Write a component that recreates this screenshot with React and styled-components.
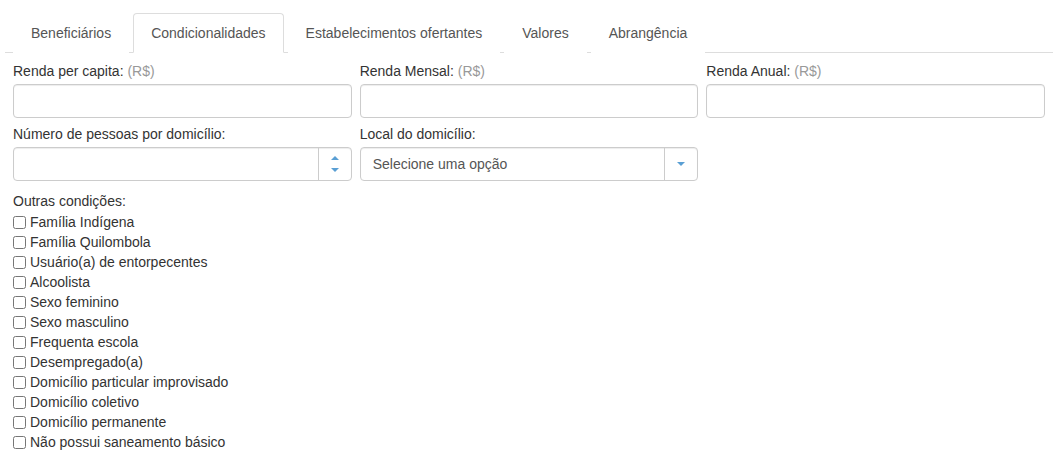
import React from 'react';
import styled, { createGlobalStyle } from 'styled-components';

const GlobalStyle = createGlobalStyle`
    * {
        box-sizing: border-box;
    }

    body {
        margin: 0;
        background: #fff;
        font-family: "Liberation Sans", Arial, sans-serif;
        font-size: 14px;
        color: #333;
    }
`;

const tabs = ['Beneficiários', 'Condicionalidades', 'Estabelecimentos ofertantes', 'Valores', 'Abrangência'];

const conditions = [
    'Família Indígena',
    'Família Quilombola',
    'Usuário(a) de entorpecentes',
    'Alcoolista',
    'Sexo feminino',
    'Sexo masculino',
    'Frequenta escola',
    'Desempregado(a)',
    'Domicílio particular improvisado',
    'Domicílio coletivo',
    'Domicílio permanente',
    'Não possui saneamento básico'
];

export default function App() {
    return (
        <>
            <GlobalStyle />
            <Page>
                <TabBar>
                    {tabs.map((t) => (
                        <Tab key={t} active={t === 'Condicionalidades'}>{t}</Tab>
                    ))}
                </TabBar>

                <Form>
                    <Row>
                        <Field>
                            <Label>Renda per capita: <Hint>(R$)</Hint></Label>
                            <Input type="text" />
                        </Field>
                        <Field>
                            <Label>Renda Mensal: <Hint>(R$)</Hint></Label>
                            <Input type="text" />
                        </Field>
                        <Field>
                            <Label>Renda Anual: <Hint>(R$)</Hint></Label>
                            <Input type="text" />
                        </Field>
                    </Row>

                    <Row>
                        <Field>
                            <Label>Número de pessoas por domicílio:</Label>
                            <Group>
                                <GroupInput type="text" />
                                <Addon>
                                    <Arrow up />
                                    <Arrow />
                                </Addon>
                            </Group>
                        </Field>
                        <Field>
                            <Label>Local do domicílio:</Label>
                            <Group>
                                <SelectText>Selecione uma opção</SelectText>
                                <Addon>
                                    <Arrow />
                                </Addon>
                            </Group>
                        </Field>
                    </Row>

                    <Others>
                        <Label>Outras condições:</Label>
                        <ul>
                            {conditions.map((c) => (
                                <Check key={c}>
                                    <input type="checkbox" />
                                    <span>{c}</span>
                                </Check>
                            ))}
                        </ul>
                    </Others>
                </Form>
            </Page>
        </>
    );
}

const Page = styled.div`
    padding: 13px 5px 0;
`;

const TabBar = styled.nav`
    display: flex;
    border-bottom: 1px solid #ddd;
    padding-left: 8px;
`;

const Tab = styled.div`
    height: 40px;
    margin-bottom: -1px;
    margin-right: 4px;
    padding: 0 17px;
    display: flex;
    align-items: center;
    color: #555;
    border: 1px solid ${props => props.active ? '#ddd' : 'transparent'};
    border-bottom-color: ${props => props.active ? '#fff' : 'transparent'};
    border-radius: 4px 4px 0 0;
    background: #fff;
    cursor: pointer;
`;

const Form = styled.div`
    padding: 8px 8px 0;
`;

const Row = styled.div`
    display: grid;
    grid-template-columns: repeat(3, 1fr);
    column-gap: 8px;
    margin-bottom: 6px;
`;

const Field = styled.div`
    display: flex;
    flex-direction: column;
`;

const Label = styled.label`
    display: block;
    line-height: 20px;
    margin-bottom: 3px;
    color: #333;
`;

const Hint = styled.span`
    color: #999;
`;

const Input = styled.input`
    height: 34px;
    width: 100%;
    border: 1px solid #ccc;
    border-radius: 4px;
    padding: 6px 12px;
    font: inherit;
    box-shadow: inset 0 1px 1px rgba(0, 0, 0, 0.075);
    outline: none;
`;

const Group = styled.div`
    height: 34px;
    display: flex;
    border: 1px solid #ccc;
    border-radius: 4px;
    box-shadow: inset 0 1px 1px rgba(0, 0, 0, 0.075);
`;

const GroupInput = styled.input`
    flex: 1;
    min-width: 0;
    border: none;
    background: transparent;
    padding: 6px 12px;
    font: inherit;
    outline: none;
`;

const SelectText = styled.div`
    flex: 1;
    padding: 0 12px;
    display: flex;
    align-items: center;
    color: #555;
`;

const Addon = styled.div`
    width: 33px;
    border-left: 1px solid #ccc;
    display: flex;
    flex-direction: column;
    align-items: center;
    justify-content: space-around;
    padding: 4px 0;
`;

const Arrow = styled.span`
    width: 0;
    height: 0;
    border-left: 4px solid transparent;
    border-right: 4px solid transparent;
    ${props => props.up
        ? 'border-bottom: 4px solid #5a9fd4;'
        : 'border-top: 4px solid #5a9fd4;'}
`;

const Others = styled.div`
    margin-top: 10px;

    ${Label} {
        margin-bottom: 1px;
    }

    ul {
        list-style: none;
        margin: 0;
        padding: 0;
    }
`;

const Check = styled.li`
    display: flex;
    align-items: center;
    height: 20px;

    input {
        width: 13px;
        height: 13px;
        margin: 0 4px 0 0;
    }
`;
